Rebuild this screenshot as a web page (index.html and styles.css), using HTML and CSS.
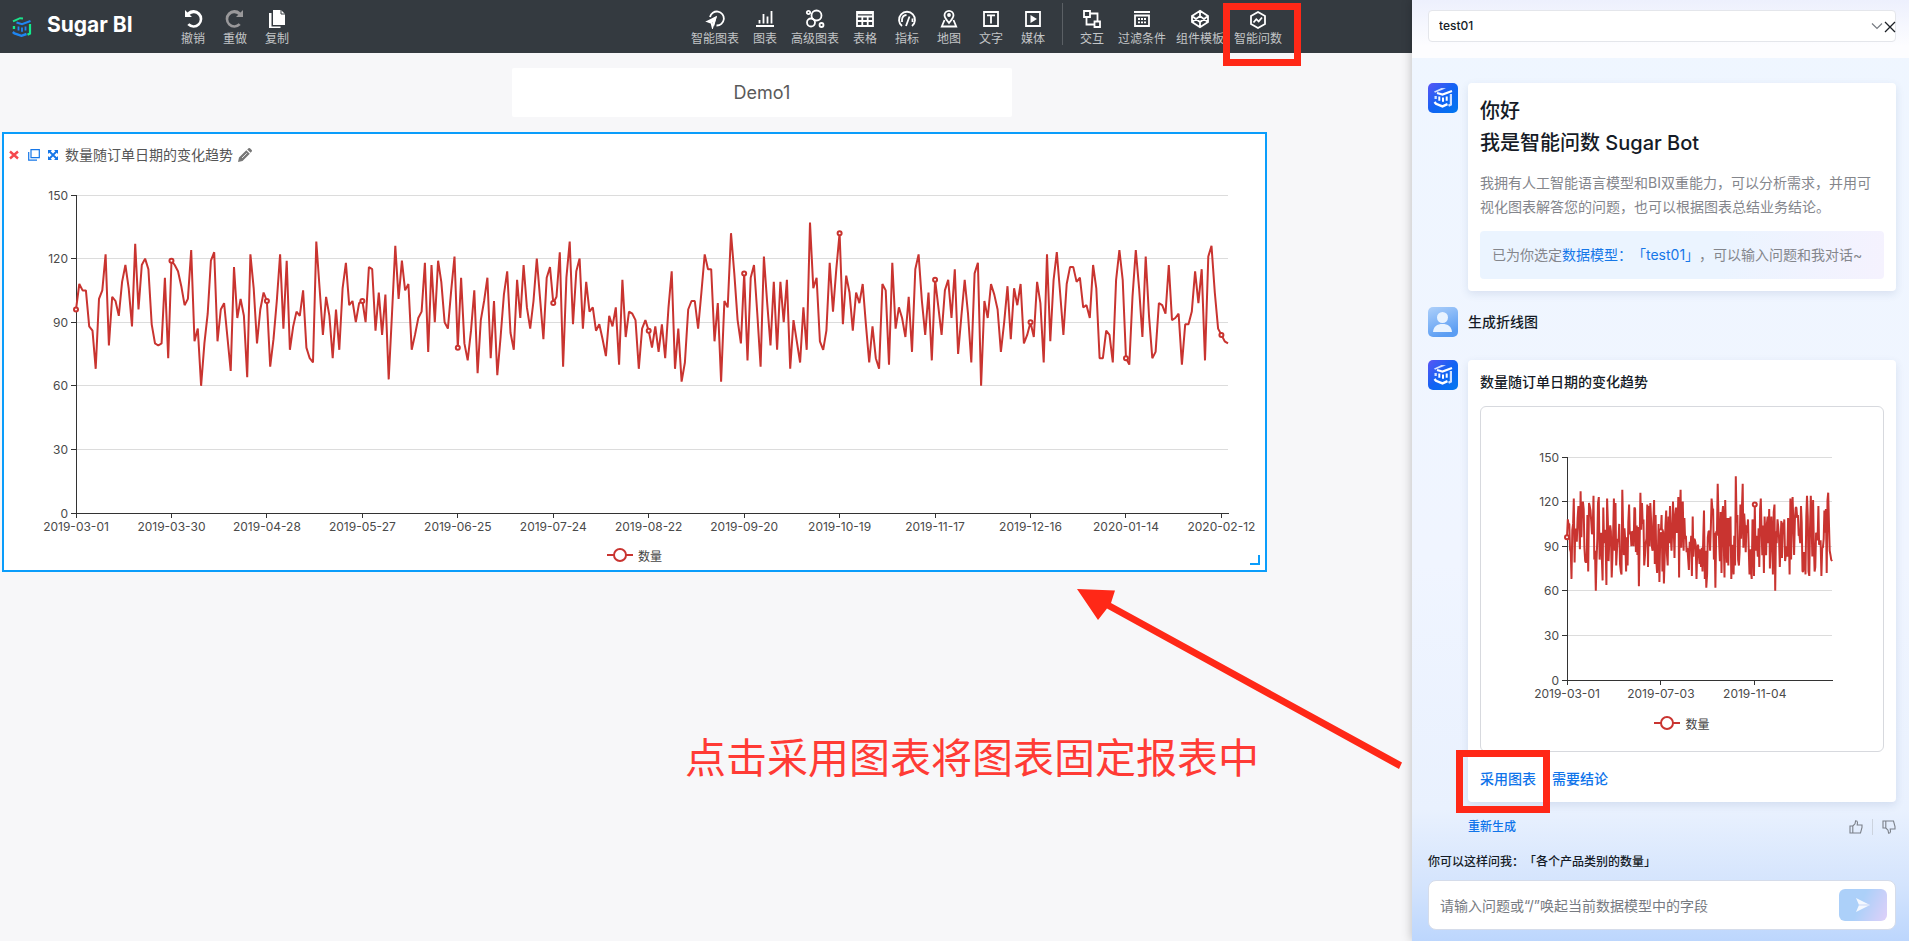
FILE: index.html
```html
<!DOCTYPE html>
<html lang="zh-CN">
<head>
<meta charset="utf-8">
<title>Sugar BI</title>
<link rel="stylesheet" href="styles.css">
</head>
<body>
<svg class="defs" aria-hidden="true">
  <defs>
    <linearGradient id="botFill" x1="0" y1="0" x2="1" y2="1"><stop offset="0" stop-color="#5a55f5"/><stop offset="0.5" stop-color="#1263f3"/><stop offset="1" stop-color="#0078f0"/></linearGradient>
    <linearGradient id="userFill" x1="0" y1="0" x2="0.4" y2="1"><stop offset="0" stop-color="#aed0fa"/><stop offset="1" stop-color="#5b9df3"/></linearGradient>
  </defs>
  <symbol id="bot" viewBox="0 0 30 30">
    <rect width="30" height="30" rx="5" fill="url(#botFill)"/>
    <path d="M6 8.600 13.500 5 18 5.300 7 9.800Z" fill="#d5e2ff"/>
    <path d="M9 10 14.500 11.500 24 8" fill="none" stroke="#fff" stroke-width="2.200"/>
    <path d="M22.900 11V21.500L20.500 22.800" fill="none" stroke="#cfe1ff" stroke-width="2.200"/>
    <path d="M11.300 13.500V17.800M15 14.500V18.800M18.700 13.500V17.800" fill="none" stroke="#fff" stroke-width="2"/>
    <path d="M6.500 19 8 20.800 14.500 23.400 19.500 21.200" fill="none" stroke="#fff" stroke-width="2.400"/>
    <rect x="6.500" y="13" width="2.300" height="3" fill="#d5e2ff"/>
  </symbol>
</svg>
<div class="app">
  <div class="workspace">
    <header class="topbar">
      <svg class="logo" viewBox="0 0 20 20" aria-hidden="true">
        <path d="M1 4.400 8 1.200 11 1.400" stroke="#1be28b" stroke-width="2" fill="none"/>
        <path d="M4.500 5.500 10 7.200 18.500 4" stroke="#1f86f2" stroke-width="2.200" fill="none"/>
        <path d="M18 7V16.500L15.500 17.800" stroke="#12e98c" stroke-width="2.200" fill="none"/>
        <path d="M6.500 9.500V13.500M10 10.500V14.700M13.500 9.500V13.500" stroke="#1f86f2" stroke-width="1.800" fill="none"/>
        <path d="M.8 15 2.500 16.500 9.500 18.800 14.500 17" stroke="#1f86f2" stroke-width="2.400" fill="none"/>
        <rect x=".8" y="9" width="2.300" height="3" fill="#12e98c"/>
      </svg>
      <span class="brand">Sugar BI</span>
      <nav class="tools tools-edit">
        <button class="tool"><svg viewBox="0 0 20 20"><path d="M2 1v7h7L6.700 5.700A6 6 0 1 1 6.300 14.300L4.300 16.100A8.800 8.800 0 1 0 4.500 3.500Z" fill="#fff"/></svg>撤销</button>
        <button class="tool"><svg viewBox="0 0 20 20"><path d="M18 1v7h-7L13.300 5.700A6 6 0 1 0 13.700 14.300L15.700 16.100A8.800 8.800 0 1 1 15.500 3.500Z" fill="#99989a"/></svg>重做</button>
        <button class="tool"><svg viewBox="0 0 20 20"><path d="M6 1h8l4 4v11H6Z" fill="#fff"/><path d="M14 1v4h4" stroke="#343a40" fill="none"/><path d="M4.500 4H2v15h11.500v-1.600H4.500Z" fill="#fff"/></svg>复制</button>
      </nav>
      <nav class="tools tools-add">
        <button class="tool"><svg class="line" viewBox="0 0 20 20"><path d="M5 8A7 7 0 1 1 11.500 16.500"/><path d="M3 12.500 12 7 9 17.500 7.500 13.500Z" fill="#fff" stroke="none"/><path d="M2.500 12.500 10.500 8.500 7.500 18 6.500 14Z"/></svg>智能图表</button>
        <button class="tool"><svg class="line" viewBox="0 0 20 20"><path d="M1 17h18M4.500 14.500V11M8.500 14.500V5M12.500 14.500V7.500M16.500 14.500V2"/></svg>图表</button>
        <button class="tool"><svg class="line" viewBox="0 0 20 20"><circle cx="11.500" cy="6.500" r="5"/><circle cx="6" cy="13.500" r="4"/><circle cx="3.500" cy="3.500" r="1.700"/><circle cx="16.500" cy="16" r="2"/></svg>高级图表</button>
        <button class="tool"><svg class="line" viewBox="0 0 20 20"><path d="M2 3h16v14H2ZM2 7.500h16M2 12h16M7.300 7.500V17M12.700 7.500V17M2 4.300h16"/></svg>表格</button>
        <button class="tool"><svg class="line" viewBox="0 0 20 20"><path d="M5 17A8 8 0 1 1 15 17M5 13V10.500A5 5 0 0 1 9.500 6M15.500 9.500V13M9 17 12.500 7.500"/></svg>指标</button>
        <button class="tool"><svg class="line" viewBox="0 0 20 20"><path d="M10 14C7 10.500 5.500 8.500 5.500 6.300a4.500 4.500 0 0 1 9 0C14.500 8.500 13 10.500 10 14ZM5.500 11 2.800 17.500H17.200L14.500 11"/><circle cx="10" cy="6" r="1"/></svg>地图</button>
        <button class="tool"><svg class="line" viewBox="0 0 20 20"><path d="M3 3h14v14H3ZM6 6.300h8M10 6.300V14.500"/></svg>文字</button>
        <button class="tool"><svg class="line" viewBox="0 0 20 20"><path d="M3 3h14v14H3Z"/><path d="M7.500 6 14 10 7.500 14Z" fill="#fff" stroke="none"/></svg>媒体</button>
        <span class="tool-divider"></span>
        <button class="tool"><svg class="line" viewBox="0 0 20 20"><path d="M2 2h6v6H2ZM12.500 12.500h5.500v5.500h-5.500ZM8 4.500h7.500V12.500M4.500 8v7.500h8"/></svg>交互</button>
        <button class="tool"><svg class="line" viewBox="0 0 20 20"><path d="M2 3h16M3 6.500h14V17H3Z"/><path d="M6 10h8M6 13.300h8" stroke-dasharray="2 1"/></svg>过滤条件</button>
        <button class="tool"><svg class="line" viewBox="0 0 20 20"><path d="M10 1.800 18 7V13L10 18.200 2 13V7ZM10 1.800V7M10 13V18.200M2 7 10 13 18 7M2 13 10 7 18 13"/></svg>组件模板</button>
        <button class="tool"><svg class="line" viewBox="0 0 20 20"><path d="M10 3 17 7V15L10 19 3 15V7Z"/><path d="M5.500 13.500 8.300 10.200 10.700 12.500 14 8.500"/></svg>智能问数<span class="mark mark-tool"></span></button>
      </nav>
    </header>
    <main class="canvas">
      <h1 class="report-title">Demo1</h1>
      <section class="widget">
        <div class="widget-head">
          <button class="icon-btn" aria-label="删除"><svg viewBox="0 0 14 14"><path d="M3 3.500 11 10.500M11 3.500 3 10.500" stroke="#f5484d" stroke-width="2.400"/></svg></button>
          <button class="icon-btn" aria-label="复制"><svg viewBox="0 0 14 14"><path d="M4 1.700h8.300v8H4ZM1.700 4V12.200H10" fill="none" stroke="#1677e8" stroke-width="1.200"/></svg></button>
          <button class="icon-btn" aria-label="全屏"><svg viewBox="0 0 14 14"><path d="M3 3 11 11M11 3 3 11" stroke="#1677e8" stroke-width="1.800"/><path d="M2 2h4L2 6ZM12 2v4L8 2ZM2 12V8l4 4ZM12 12H8l4-4Z" fill="#1677e8"/></svg></button>
          <span class="widget-title">数量随订单日期的变化趋势</span>
          <button class="icon-btn" aria-label="编辑"><svg viewBox="0 0 14 14"><path d="M0 14 1 9.500 8.300 2.200 11.800 5.700 4.500 13ZM9.200 1.400 10.500.3q.8-.6 1.500 0l1.700 1.700q.6.700 0 1.500L12.600 4.800Z" fill="#777"/><path d="M4 10 8.800 5.200" stroke="#fff" stroke-width=".8"/></svg></button>
        </div>
        <svg class="chart chart-main" role="img" aria-label="数量随订单日期的变化趋势" data-left="72" data-right="37" data-top="30" data-plot="318" data-step="29"></svg>
        <div class="legend"><svg viewBox="0 0 26 14"><path d="M0 7H26" stroke="#c93430" stroke-width="2"/><circle cx="13" cy="7" r="6" fill="#fff" stroke="#c93430" stroke-width="2"/></svg>数量</div>
        <span class="resize"></span>
      </section>
      <p class="note">点击采用图表将图表固定报表中</p>
      <svg class="arrow" viewBox="0 0 326 182" aria-hidden="true"><path d="M0 0 38 1.500 34 14 325 173.500 322 180 30 19.500 21 31Z" fill="#ff2817"/></svg>
    </main>
  </div>
  <aside class="panel">
    <div class="panel-head">
      <select class="model" aria-label="数据模型"><option>test01</option></select>
      <svg class="caret" viewBox="0 0 12 12" aria-hidden="true"><path d="M1 3.500 6 8.500 11 3.500" fill="none" stroke="#777b82" stroke-width="1.200"/></svg>
      <button class="close" aria-label="关闭"><svg viewBox="0 0 12 12"><path d="M1 1 11 11M11 1 1 11" stroke="#1c2026" stroke-width="1.300"/></svg></button>
    </div>
    <div class="chat">
      <div class="msg">
        <svg class="avatar"><use href="#bot"/></svg>
        <div class="card">
          <h2 class="hello">你好<br>我是智能问数 Sugar Bot</h2>
          <p class="intro">我拥有人工智能语言模型和BI双重能力，可以分析需求，并用可视化图表解答您的问题，也可以根据图表总结业务结论。</p>
          <p class="picked">已为你选定<a href="#model">数据模型：「test01」</a>，可以输入问题和我对话~</p>
        </div>
      </div>
      <div class="msg msg-user">
        <svg class="avatar" viewBox="0 0 30 30"><rect width="30" height="30" rx="5" fill="url(#userFill)"/><circle cx="14.500" cy="10.500" r="5.500" fill="#e9f3ff"/><path d="M5 25C5.500 19.500 9 17 14.500 17S23.500 19.500 24 25Z" fill="#e9f3ff"/></svg>
        <p class="said">生成折线图</p>
      </div>
      <div class="msg">
        <svg class="avatar"><use href="#bot"/></svg>
        <div class="reply">
          <div class="card">
            <h3 class="card-title">数量随订单日期的变化趋势</h3>
            <div class="chart-box">
              <svg class="chart chart-mini" role="img" aria-label="数量随订单日期的变化趋势" data-left="86" data-right="51" data-top="50" data-plot="223" data-step="124"></svg>
              <div class="legend"><svg viewBox="0 0 26 14"><path d="M0 7H26" stroke="#c93430" stroke-width="2"/><circle cx="13" cy="7" r="6" fill="#fff" stroke="#c93430" stroke-width="2"/></svg>数量</div>
            </div>
            <div class="actions">
              <button class="link-btn">采用图表<span class="mark mark-adopt"></span></button>
              <button class="link-btn">需要结论</button>
            </div>
          </div>
          <div class="feedback">
            <button class="link-btn regen">重新生成</button>
            <button class="icon-btn" aria-label="赞"><svg viewBox="0 0 14 14"><path d="M1 6h2.800v7H1ZM3.800 6 6 3.800 6.600.8q1.800 0 1.900 1.700L8.200 5H13V7.500L11.500 13H3.800" fill="none" stroke="#7b8089" stroke-width="1.100"/></svg></button>
            <span class="fb-divider"></span>
            <button class="icon-btn" aria-label="踩"><svg viewBox="0 0 14 14"><path d="M1 8h2.800V1H1ZM3.800 8 6 10.200 6.600 13.200q1.800 0 1.900-1.700L8.200 9H13V6.500L11.500 1H3.800" fill="none" stroke="#7b8089" stroke-width="1.100"/></svg></button>
          </div>
        </div>
      </div>
    </div>
    <form class="ask">
      <label class="hint" for="q">你可以这样问我：「各个产品类别的数量」</label>
      <div class="ask-box">
        <input id="q" type="text" placeholder="请输入问题或“/”唤起当前数据模型中的字段">
        <button class="send" type="button" aria-label="发送"><svg viewBox="0 0 16 14"><path d="M1 0 15 7 1 14 4 7Z" fill="#f4f8ff"/><path d="M4 7H15" stroke="#c9d6f6" stroke-width="1"/></svg></button>
      </div>
    </form>
  </aside>
</div>
<script src="charts.js"></script>
</body>
</html>
```
FILE: styles.css
```css
* { box-sizing: border-box; }
body {
  margin: 0;
  font-family: Inter, "Noto Sans CJK SC", sans-serif;
  font-size: 14px;
  color: #151b26;
  background: #f7f7f9;
  text-spacing-trim: space-all;
}
h1, h2, h3, p { margin: 0; font-weight: 400; }
button {
  padding: 0;
  border: 0;
  background: none;
  font: inherit;
  color: inherit;
  cursor: pointer;
}
button svg { display: block; }
.defs { position: absolute; width: 0; height: 0; }

.app { display: flex; min-height: 100vh; overflow: hidden; }
.workspace { flex: 1; min-width: 0; display: flex; flex-direction: column; }

.topbar {
  display: flex;
  align-items: center;
  height: 53px;
  padding-left: 12px;
  background: #343a40;
}
.logo { width: 20px; height: 20px; flex: none; }
.brand { margin-left: 15px; width: 125px; padding-bottom: 3px; font-size: 21px; font-weight: 700; line-height: 28px; color: #fff; white-space: nowrap; }
.tools { display: flex; align-items: flex-start; height: 100%; padding-top: 3px; }
.tools-add { margin-left: auto; margin-right: 125px; }
.tool {
  position: relative;
  display: flex;
  flex-direction: column;
  align-items: center;
  min-width: 42px;
  padding: 6px 5px 0;
  font-size: 12px;
  line-height: 19px;
  color: #c3c5c7;
  white-space: nowrap;
}
.tool svg { width: 20px; height: 20px; }
.line { fill: none; stroke: #fff; stroke-width: 1.8; }
.tool-divider { width: 1px; height: 42px; margin: 0 8px; background: #5b6065; }
.mark { position: absolute; border: 7px solid #ff2817; z-index: 3; pointer-events: none; }
.mark-tool { inset: 0 -14px -18px -6px; }
.mark-adopt { inset: -18px -14px -23px -24px; }

.canvas {
  position: relative;
  flex: 1;
  display: grid;
  grid-template-columns: minmax(0, 1fr);
  grid-auto-rows: max-content;
  padding: 15px 145px 0 2px;
}
.report-title {
  width: 500px;
  margin-left: 510px;
  font-size: 18px;
  line-height: 49px;
  text-align: center;
  color: #5a5a5a;
  background: #fff;
  border-radius: 2px;
}
.widget { position: relative; margin-top: 15px; border: 2px solid #0a9dfb; background: #fff; }
.widget-head { display: flex; align-items: center; gap: 5px; padding: 11px 0 0 3px; height: 31px; }
.icon-btn svg { width: 14px; height: 14px; }
.widget-head .icon-btn:first-child { margin-right: 1px; }
.widget-title { line-height: 20px; color: #555; }
.resize { position: absolute; right: 5px; bottom: 5px; width: 10px; height: 10px; border: solid #0a9dfb; border-width: 0 2px 2px 0; }

.chart { display: block; width: 100%; }
.chart-main { height: 375px; }
.chart-mini { height: 301px; }
.chart text { font-size: 12px; fill: #4a4a4a; }
.chart .grid { stroke: #dcdcdc; }
.chart .axis { stroke: #333; fill: none; }
.chart .series { stroke: #c93430; stroke-width: 2; stroke-linejoin: bevel; fill: none; }
.chart circle { fill: #fff; stroke: #c93430; stroke-width: 2; }
.legend { display: flex; align-items: center; justify-content: center; gap: 5px; height: 30px; font-size: 12px; color: #444; }
.legend svg { width: 26px; height: 14px; }

.note { margin: 156px 0 0 683px; font-size: 41px; line-height: 60px; color: #ff3b35; white-space: nowrap; }
.arrow { position: absolute; left: 1077px; top: 536px; width: 326px; height: 182px; }

.panel {
  position: relative;
  z-index: 1;
  width: 497px;
  display: flex;
  flex-direction: column;
  background: linear-gradient(180deg, #eff6ff 0%, #f0f5ff 60%, #e9f1fe 86%, #d4e4fd 94%, #bcd6fd 100%);
  box-shadow: 0 0 10px rgba(0, 0, 0, 0.25);
}
.panel-head { position: relative; padding: 10px 13px 16px 16px; background: linear-gradient(180deg, #edf0fd, #fdfdff 80%); }
.model {
  display: block;
  appearance: none;
  width: 100%;
  height: 32px;
  padding: 0 10px;
  border: 1px solid #e4e6eb;
  border-radius: 4px;
  background: #fff;
  font: 500 12px/30px Inter, "Noto Sans CJK SC", sans-serif;
  color: #151b26;
}
.caret { position: absolute; right: 26px; top: 20px; width: 12px; height: 12px; }
.close { position: absolute; right: 13px; top: 21px; }
.close svg { width: 12px; height: 12px; }

.chat { display: flex; flex-direction: column; gap: 16px; padding: 25px 13px 0 16px; }
.msg { display: flex; gap: 10px; align-items: flex-start; }
.avatar { flex: none; width: 30px; height: 30px; }
.card { flex: 1; min-width: 0; padding: 12px; border-radius: 4px; background: #fff; box-shadow: 0 3px 8px rgba(40, 70, 130, 0.12); }
.hello { font-size: 20px; font-weight: 500; line-height: 32px; }
.intro { margin-top: 12px; line-height: 24px; color: #84868c; }
.picked {
  margin-top: 12px;
  padding: 12px;
  border-radius: 4px;
  line-height: 24px;
  color: #84868c;
  background: linear-gradient(100deg, #ebf4ff 60%, #f5f2fe);
  white-space: nowrap;
}
.picked a { color: #1677e8; text-decoration: none; }
.msg-user { margin-bottom: 7px; }
.said { line-height: 30px; font-weight: 500; }
.reply { flex: 1; min-width: 0; }
.card-title { font-size: 14px; font-weight: 500; line-height: 20px; }
.chart-box { margin-top: 14px; padding-bottom: 13px; border: 1px solid #d7d9de; border-radius: 6px; }
.actions { display: flex; gap: 16px; padding-top: 16px; }
.link-btn { position: relative; line-height: 22px; font-weight: 500; color: #0f74ea; }
.feedback { display: flex; align-items: center; gap: 9px; height: 20px; margin-top: 15px; }
.feedback .regen { margin-right: auto; font-size: 12px; line-height: 20px; }
.fb-divider { width: 1px; height: 16px; background: #ccd3de; }

.ask { margin-top: auto; padding: 14px 13px 11px 16px; }
.hint { display: block; line-height: 20px; font-size: 12px; font-weight: 500; }
.ask-box {
  display: flex;
  align-items: center;
  height: 50px;
  margin-top: 8px;
  padding: 0 8px 0 11px;
  border: 1px solid #d5dcea;
  border-radius: 8px;
  background: #fff;
}
.ask-box input { flex: 1; min-width: 0; padding: 0; border: 0; outline: 0; background: none; font: inherit; }
.ask-box input::placeholder { color: #777b82; opacity: 1; }
.send { display: flex; align-items: center; justify-content: center; width: 48px; height: 32px; border-radius: 6px; background: linear-gradient(115deg, #acd0f9 45%, #dfd0f9); }
.send svg { width: 16px; height: 14px; }
```
FILE: charts.js
```javascript
// Daily order quantity, starting 2019-03-01.
const START = Date.UTC(2019, 2, 1);
const DATA = [
  96,108,105,105,88,86,68,101,105,122,79,102,100,93,109,117,106,88,127,96,117,120,115,89,80,79,80,111,73,
  119,117,114,107,98,101,124,81,87,60,80,94,119,123,81,96,99,83,67,116,92,101,93,64,122,106,80,96,104,
  100,69,82,100,122,87,119,77,88,95,93,105,78,73,71,128,106,84,102,93,73,96,77,106,118,98,100,90,99,
  100,90,116,115,86,104,84,103,63,94,126,101,119,105,108,77,84,92,95,118,76,117,90,119,109,90,87,105,121,
  78,111,80,72,86,105,66,91,100,111,73,100,65,83,103,114,85,77,110,92,117,97,87,100,120,101,82,111,116,
  99,102,123,69,111,128,89,114,120,87,109,95,97,86,89,82,74,93,88,97,70,110,83,95,94,91,68,87,91,
  86,78,88,76,89,73,97,114,68,87,62,71,96,100,100,87,104,122,115,115,81,99,62,100,97,132,113,91,80,
  113,72,111,117,94,69,121,99,79,109,77,109,90,110,68,91,81,71,97,77,137,106,111,81,77,86,118,95,115,
  132,89,112,104,86,104,99,108,89,71,88,73,68,108,105,70,118,87,97,92,83,102,76,115,122,100,84,104,72,
  110,97,84,105,110,92,115,75,93,110,94,71,113,118,60,100,92,108,103,96,76,90,107,82,106,98,108,80,84,
  90,83,109,99,71,122,81,110,123,104,84,108,116,116,109,111,97,98,92,117,106,73,73,86,84,71,110,124,110,
  73,70,102,124,106,83,121,93,73,76,99,98,94,117,91,92,94,70,89,89,95,114,99,115,72,121,126,104,87,
  84,81,80
];

const dateLabel = i => new Date(START + i * 86400000).toISOString().slice(0, 10);

function draw(svg) {
  const o = svg.dataset;
  const left = +o.left, top = +o.top, plot = +o.plot, step = +o.step;
  const right = svg.clientWidth - o.right;
  const x = i => left + (right - left) * i / (DATA.length - 1);
  const y = v => top + plot * (1 - v / 150);
  let out = '';
  for (let v = 0; v <= 150; v += 30) {
    const gy = Math.floor(y(v)) + 0.5;
    if (v) out += `<path class="grid" d="M${left} ${gy}H${right}"/>`;
    out += `<path class="axis" d="M${left - 5} ${gy}h5"/>`;
    out += `<text x="${left - 8}" y="${gy + 4}" text-anchor="end">${v}</text>`;
  }
  out += `<path class="axis" d="M${left + 0.5} ${top}v${plot + 0.5}H${right + 1}"/>`;
  let dots = '';
  for (let i = 0; i < DATA.length; i += step) {
    out += `<path class="axis" d="M${Math.floor(x(i)) + 0.5} ${top + plot}v5"/>`;
    out += `<text x="${x(i)}" y="${top + plot + 18}" text-anchor="middle">${dateLabel(i)}</text>`;
    dots += `<circle cx="${x(i)}" cy="${y(DATA[i])}" r="2"/>`;
  }
  const line = DATA.map((v, i) => x(i).toFixed(1) + ' ' + y(v).toFixed(1)).join('L');
  svg.innerHTML = out + `<path class="series" d="M${line}"/>` + dots;
}

const drawAll = () => document.querySelectorAll('.chart').forEach(draw);
addEventListener('resize', drawAll);
drawAll();
```
